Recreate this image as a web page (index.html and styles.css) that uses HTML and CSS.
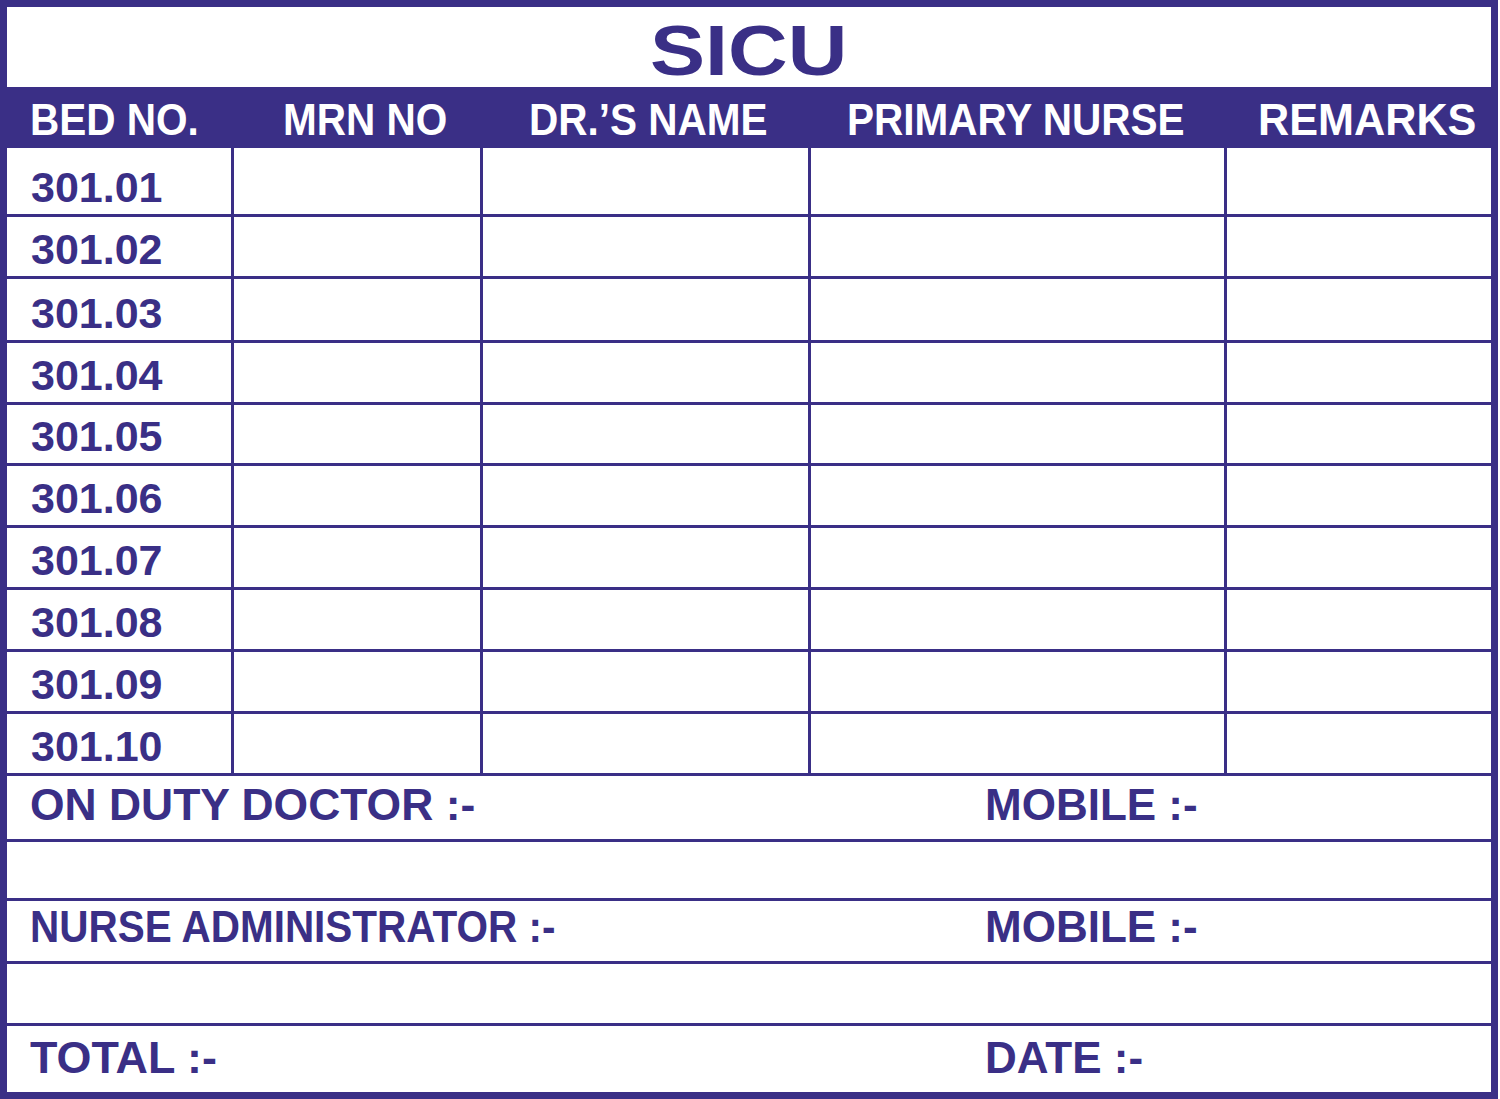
FILE: index.html
```html
<!DOCTYPE html>
<html>
<head>
<meta charset="utf-8">
<title>SICU</title>
<link rel="stylesheet" href="styles.css">
</head>
<body>
<div class="board">
  <div class="title"><span class="title-text">SICU</span></div>
  <div class="head">
    <div class="hcell h1"><span class="sq">BED NO.</span></div>
    <div class="hcell h2"><span class="sq">MRN NO</span></div>
    <div class="hcell h3"><span class="sq">DR.’S NAME</span></div>
    <div class="hcell h4"><span class="sq">PRIMARY NURSE</span></div>
    <div class="hcell h5"><span class="sq sq-r">REMARKS</span></div>
  </div>
  <div class="rows">
    <div class="row first"><div class="cell bed">301.01</div><div class="cell"></div><div class="cell"></div><div class="cell"></div><div class="cell"></div></div>
    <div class="row"><div class="cell bed">301.02</div><div class="cell"></div><div class="cell"></div><div class="cell"></div><div class="cell"></div></div>
    <div class="row tall"><div class="cell bed">301.03</div><div class="cell"></div><div class="cell"></div><div class="cell"></div><div class="cell"></div></div>
    <div class="row"><div class="cell bed">301.04</div><div class="cell"></div><div class="cell"></div><div class="cell"></div><div class="cell"></div></div>
    <div class="row short"><div class="cell bed">301.05</div><div class="cell"></div><div class="cell"></div><div class="cell"></div><div class="cell"></div></div>
    <div class="row"><div class="cell bed">301.06</div><div class="cell"></div><div class="cell"></div><div class="cell"></div><div class="cell"></div></div>
    <div class="row"><div class="cell bed">301.07</div><div class="cell"></div><div class="cell"></div><div class="cell"></div><div class="cell"></div></div>
    <div class="row"><div class="cell bed">301.08</div><div class="cell"></div><div class="cell"></div><div class="cell"></div><div class="cell"></div></div>
    <div class="row"><div class="cell bed">301.09</div><div class="cell"></div><div class="cell"></div><div class="cell"></div><div class="cell"></div></div>
    <div class="row"><div class="cell bed">301.10</div><div class="cell"></div><div class="cell"></div><div class="cell"></div><div class="cell"></div></div>
  </div>
  <div class="foot">
    <div class="frow f1"><div class="fl"><span class="sq-o">ON DUTY DOCTOR :-</span></div><div class="fr"><span>MOBILE :-</span></div></div>
    <div class="frow f2"></div>
    <div class="frow f3"><div class="fl"><span class="sq-n">NURSE ADMINISTRATOR :-</span></div><div class="fr"><span>MOBILE :-</span></div></div>
    <div class="frow f4"></div>
    <div class="frow f5"><div class="fl"><span class="sq-t">TOTAL :-</span></div><div class="fr"><span>DATE :-</span></div></div>
  </div>
</div>
</body>
</html>
```

FILE: styles.css
```css
* { box-sizing: border-box; }

html, body {
  margin: 0;
  padding: 0;
  background: #ffffff;
}

body {
  font-family: "Liberation Sans", Arial, sans-serif;
  font-weight: bold;
  color: #3a2f86;
}

.board {
  width: 1498px;
  height: 1099px;
  border: 7px solid #3a2f86;
  display: flex;
  flex-direction: column;
  background: #ffffff;
}

.title {
  height: 80px;
  flex: none;
  text-align: center;
  padding-top: 8px;
  line-height: 72px;
  font-size: 70px;
}

.title-text {
  display: inline-block;
  transform: scaleX(1.18);
  transform-origin: center;
}

.head {
  height: 61px;
  flex: none;
  background: #3a2f86;
  color: #ffffff;
  display: grid;
  grid-template-columns: 227px 249px 328px 416px 1fr;
  font-size: 45px;
  line-height: 57px;
  padding-top: 4px;
  white-space: nowrap;
}

.hcell { overflow: visible; }
.h1 { padding-left: 23px; }
.h2 { padding-left: 49px; }
.h3 { padding-left: 46px; }
.h4 { padding-left: 36px; }
.h5 { padding-left: 31px; }

.sq {
  display: inline-block;
  transform: scaleX(0.9);
  transform-origin: left center;
}

.sq-r { transform: scaleX(0.96); }

.rows {
  flex: none;
  display: flex;
  flex-direction: column;
}

.row {
  height: 62px;
  display: grid;
  grid-template-columns: 227px 249px 328px 416px 1fr;
  border-bottom: 3px solid #3a2f86;
}

.row.first { height: 69px; }
.row.tall { height: 64px; }
.row.short { height: 61px; }

.cell {
  border-right: 3px solid #3a2f86;
}

.cell:last-child { border-right: none; }

.bed {
  font-size: 43px;
  display: flex;
  align-items: flex-end;
  padding-left: 24px;
  padding-bottom: 2px;
  line-height: 1.15;
}

.foot {
  flex: 1;
  display: flex;
  flex-direction: column;
}

.frow {
  display: grid;
  grid-template-columns: 978px 1fr;
  border-bottom: 3px solid #3a2f86;
  font-size: 44px;
  line-height: 1.15;
  white-space: nowrap;
}

.f1 { height: 66px; }
.f2 { height: 59px; }
.f3 { height: 63px; }
.f4 { height: 62px; }
.f5 { flex: 1; border-bottom: none; }

.fl, .fr {
  display: flex;
  align-items: flex-end;
  padding-bottom: 8px;
}

.fl { padding-left: 23px; }

.fl span, .fr span {
  display: inline-block;
  transform-origin: left center;
}

.sq-o { transform: scaleX(1.01); }
.sq-n { transform: scaleX(0.92); }
.sq-t { transform: scaleX(1.02); }
```
